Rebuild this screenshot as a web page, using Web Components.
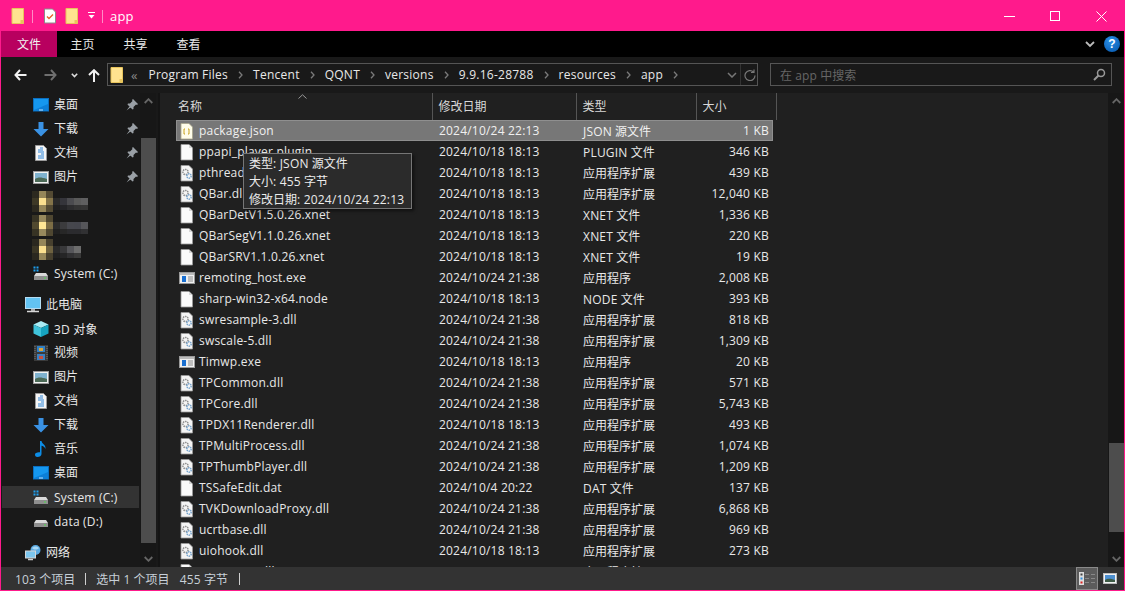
<!DOCTYPE html>
<html lang="zh"><head><meta charset="utf-8"><title>app</title>
<style>
html,body{margin:0;padding:0;background:#ff1a8c;overflow:hidden}
body{width:1125px;height:591px;font:12px "Open Sans","Noto Sans CJK SC",sans-serif;color:#e8e8e8}
</style></head><body>
<win-frame>
  <title-bar slot="title">app</title-bar>
  <ribbon-bar slot="ribbon"></ribbon-bar>
  <nav-bar slot="nav"></nav-bar>
  <nav-pane slot="side">
    <nav-item icon="desktop" pin>桌面</nav-item>
    <nav-item icon="down" pin>下载</nav-item>
    <nav-item icon="docs" pin>文档</nav-item>
    <nav-item icon="pics" pin>图片</nav-item>
    <blur-item w="1"></blur-item>
    <blur-item w="2"></blur-item>
    <blur-item w="3"></blur-item>
    <nav-item icon="sys" latin>System (C:)</nav-item>
    <nav-item icon="pc" top="8" indent>此电脑</nav-item>
    <nav-item icon="cube" latin>3D 对象</nav-item>
    <nav-item icon="video">视频</nav-item>
    <nav-item icon="pics">图片</nav-item>
    <nav-item icon="docs">文档</nav-item>
    <nav-item icon="down">下载</nav-item>
    <nav-item icon="music">音乐</nav-item>
    <nav-item icon="desktop">桌面</nav-item>
    <nav-item icon="sys" selected latin>System (C:)</nav-item>
    <nav-item icon="drive" latin>data (D:)</nav-item>
    <nav-item icon="net" top="8" indent>网络</nav-item>
  </nav-pane>
  <file-list slot="main"></file-list>
  <status-bar slot="status"></status-bar>
</win-frame>
<script>
const ICONS={
 folder:`<svg width="16" height="16" viewBox="0 0 16 16"><path d="M2 .5h11.500v15H2z" fill="#ffe38f" stroke="#e8c45c"/><path d="M13.500 12v3.500H10.500V12z" fill="#e8c45c"/></svg>`,
 check:`<svg width="16" height="16" viewBox="0 0 16 16"><path d="M2.500 1h8l3 3v11h-11z" fill="#fff" stroke="#8c8c8c"/><path d="M5 8.500l2 2 4-4" fill="none" stroke="#e9632a" stroke-width="1.400"/></svg>`,
 blank:`<svg width="16" height="18" viewBox="0 0 16 18"><path d="M2 1.500h8l3.500 3.500v12H2z" fill="#fafafa" stroke="#9a9a9a" stroke-width=".8"/><path d="M10 1.500v3.500h3.500z" fill="#d8d8d8"/></svg>`,
 json:`<svg width="16" height="18" viewBox="0 0 16 18"><path d="M2 1.500h8l3.500 3.500v12H2z" fill="#fffdea" stroke="#a8a48c" stroke-width=".8"/><path d="M6 7h-1v5h1M9 7h1v5h-1" fill="none" stroke="#c9a421"/></svg>`,
 dll:`<svg width="16" height="18" viewBox="0 0 16 18"><path d="M2 1.500h8l3.500 3.500v12H2z" fill="#f4f4f4" stroke="#9a9a9a" stroke-width=".8"/><circle cx="6.500" cy="8" r="2.600" fill="none" stroke="#8d8d8d" stroke-width="1.500" stroke-dasharray="1.500 .8"/><circle cx="10" cy="12" r="2.200" fill="none" stroke="#6f9fcb" stroke-width="1.400" stroke-dasharray="1.400 .7"/></svg>`,
 exe:`<svg width="16" height="16" viewBox="0 0 16 16"><rect x=".5" y="2.500" width="15" height="11" fill="#f0f0f0" stroke="#9a9a9a"/><rect x="1" y="3" width="14" height="2" fill="#bbb"/><rect x="3" y="6" width="4" height="6" fill="#1a6fd0"/><path d="M9 7h5M9 9h5M9 11h5" stroke="#8a8a8a"/></svg>`,
 desktop:`<svg width="16" height="14" viewBox="0 0 16 14"><rect x=".5" y=".5" width="15" height="12.500" fill="#1597ef" stroke="#0b6fc0"/><path d="M1 12l14-6v7H1z" fill="#0c7fd8"/><path d="M6 12h4" stroke="#bfe3ff"/></svg>`,
 down:`<svg width="16" height="16" viewBox="0 0 16 16"><path d="M5.500 1h5v7h5L8 15.500.5 8h5z" fill="#3a92e4"/></svg>`,
 docs:`<svg width="12" height="16" viewBox="0 0 12 16"><path d="M.5.500h8l3 3v12H.5z" fill="#f5f5f5" stroke="#9a9a9a"/><path d="M5 3h3M3 5h5M3 7h6M6 9h3M3 11h6M3 13h6" stroke="#2f86d8"/></svg>`,
 pics:`<svg width="16" height="13" viewBox="0 0 16 13"><rect x=".5" y=".5" width="15" height="12" fill="#f2f2f2" stroke="#9a9a9a"/><rect x="2" y="2" width="12" height="9" fill="#7fb2cf"/><path d="M2 8c3-2 6-2 12 0v3H2z" fill="#4c6a57"/></svg>`,
 sys:`<svg width="16" height="14" viewBox="0 0 16 14"><path d="M.500.500h2v2h-2zM3.500.500h2v2h-2zM.500 3.500h2v2h-2zM3.500 3.500h2v2h-2z" fill="#1fa0f0"/><path d="M3 7h10l2 3H1z" fill="#d9d9d9"/><rect x="1" y="10" width="14" height="4" fill="#8f8f8f"/><rect x="11" y="11.500" width="2" height="1" fill="#4be04b"/></svg>`,
 drive:`<svg width="16" height="14" viewBox="0 0 16 14"><path d="M3 6h10l2 3H1z" fill="#d9d9d9"/><rect x="1" y="9" width="14" height="4" fill="#8f8f8f"/><rect x="11" y="10.500" width="2" height="1" fill="#4be04b"/></svg>`,
 pc:`<svg width="16" height="16" viewBox="0 0 16 16"><rect x=".5" y=".5" width="15" height="11" fill="#63c3f2" stroke="#b5dcf2"/><path d="M6 12h4v2H6z" fill="#a8a8a8"/><path d="M2 14.500h12" stroke="#d8d8d8" stroke-width="1.500"/></svg>`,
 cube:`<svg width="16" height="16" viewBox="0 0 16 16"><path d="M8 0l7.500 3.500L8 7 .5 3.500z" fill="#a9ecf5"/><path d="M.5 3.500L8 7v9l-7.500-3.500z" fill="#3fc3da"/><path d="M15.500 3.500L8 7v9l7.500-3.500z" fill="#16a4c0"/></svg>`,
 video:`<svg width="14" height="16" viewBox="0 0 14 16"><rect width="14" height="16" fill="#3a3a3a"/><rect x="3" y="1" width="8" height="6" fill="#2f7fc4"/><rect x="3" y="9" width="8" height="6" fill="#3a7fc0"/><rect x="5" y="3" width="4" height="3" fill="#d9a63a"/><rect x="5" y="11" width="4" height="3" fill="#c94f3a"/><path d="M1 1v14M13 1v14" stroke="#777" stroke-dasharray="1 1" stroke-width="1"/></svg>`,
 music:`<svg width="12" height="16" viewBox="0 0 12 16"><path d="M5 0h1.500c.5 3 4.500 3.500 4 8-.6-2-2.500-3-4-3.300V13c0 2-2 3-4 3S0 15 0 13.500 2 11 5 11.300z" fill="#0d8de6"/></svg>`,
 net:`<svg width="16" height="16" viewBox="0 0 16 16"><circle cx="10.500" cy="5" r="5" fill="#5aa9e0"/><path d="M7 3c2-2 5-2 7 0-2 2-5 2-7 0z" fill="#a8d8f5"/><rect x=".5" y="6" width="10" height="7" fill="#7cc6ee" stroke="#d6d6d6"/><path d="M3 14.500h5" stroke="#cfcfcf" stroke-width="1.500"/></svg>`,
 pin:`<svg width="12" height="12" viewBox="0 0 12 12"><path d="M7 0l5 5-1 1-1-.5L7.500 8 7.500 10 6.500 10.500 1.500 5.500 2 4.500 4 4.500 6.500 2 6 1zM3.500 7.500L.5 11.500 4.500 8.500z" fill="#9aa0a6"/></svg>`
};
const L=s=>s.replace(/[\x21-\x7e]+(?: [\x21-\x7e]+)*/g,m=>`<span style="letter-spacing:.2px">${m}</span>`);
function def(name,css,html){
  customElements.define(name,class extends HTMLElement{
    constructor(){super();this.attachShadow({mode:'open'}).innerHTML=`<style>${css}</style>${typeof html==='function'?html(this):html}`;}
  });
}
customElements.define('win-icon',class extends HTMLElement{
  connectedCallback(){ if(this.shadowRoot)return; this.attachShadow({mode:'open'}).innerHTML=`<style>:host{display:inline-flex;align-items:center;justify-content:center;width:var(--w,16px);height:var(--h,18px);flex:none}svg{display:block}</style>${ICONS[this.getAttribute('name')]||''}`;}
});
def('win-frame',`
:host{display:grid;grid-template-columns:159px 948px 16px;grid-template-rows:30px 26px 36px 474px 23px;width:1123px;height:589px;margin:1px;background:#202020}
.t{grid-column:1/-1}.s{grid-column:1/-1}
.side{overflow:hidden;display:flex;border-right:2px solid #141414;padding-right:2px;background:#191919;box-sizing:border-box}
.main{overflow:hidden;background:#202020;min-width:0}
.v{background:#171717;display:flex}
`,`<div class="t"><slot name="title"></slot></div><div class="t"><slot name="ribbon"></slot></div><div class="t"><slot name="nav"></slot></div>
<div class="side"><slot name="side"></slot><scroll-rail thumb-top="45" thumb-height="405"></scroll-rail></div>
<div class="main"><slot name="main"></slot></div>
<div class="v"><scroll-rail thumb-top="350" thumb-height="89"></scroll-rail></div>
<div class="s"><slot name="status"></slot></div>`);
customElements.define('scroll-rail',class extends HTMLElement{
  connectedCallback(){ if(this.shadowRoot)return;
    const t=+this.getAttribute('thumb-top'),h=+this.getAttribute('thumb-height');
    this.attachShadow({mode:'open'}).innerHTML=`<style>:host{display:block;width:16px;height:100%;background:#171717;flex:none}
    .a{height:16px;display:flex;align-items:center;justify-content:center}
    .track{height:calc(100% - 32px);padding-top:${t-16}px;box-sizing:border-box}
    .th{width:15px;margin-left:1px;height:${h}px;background:#4d4d4d}</style>
    <div class="a"><svg width="9" height="6" viewBox="0 0 9 6"><path d="M.7 5L4.500 1.200 8.300 5" fill="none" stroke="#666" stroke-width="1.800"/></svg></div>
    <div class="track"><div class="th"></div></div>
    <div class="a"><svg width="9" height="6" viewBox="0 0 9 6"><path d="M.7 1L4.500 4.800 8.300 1" fill="none" stroke="#666" stroke-width="1.800"/></svg></div>`;
  }
});
def('title-bar',`
:host{display:flex;align-items:center;height:30px;background:#ff1a8c;color:#fff;font-size:12px}
.q{display:flex;align-items:center;padding-left:9px;--h:16px}
.sep{width:1px;height:13px;background:#ff8cc6}
.dd{margin:0 6px 0 7px;display:block}
.txt{font-size:13px;letter-spacing:.2px}
.b{margin-left:auto;display:flex}
.w{width:46px;height:30px;display:flex;align-items:center;justify-content:center}
`,`<div class="q"><win-icon name="folder"></win-icon><span class="sep" style="margin:0 9px 0 6px"></span><win-icon name="check"></win-icon><span style="width:6px"></span><win-icon name="folder"></win-icon>
<svg class="dd" width="9" height="8" viewBox="0 0 9 8"><path d="M1 .5h7" stroke="#fff"/><path d="M1.500 3h6L4.500 6.500z" fill="#fff"/></svg><span class="sep" style="margin-right:7px"></span></div><span class="txt"><slot></slot></span>
<div class="b"><div class="w"><svg width="11" height="1"><rect width="11" height="1" fill="#fff"/></svg></div><div class="w"><svg width="10" height="10"><rect x=".5" y=".5" width="9" height="9" fill="none" stroke="#fff"/></svg></div><div class="w"><svg width="11" height="11"><path d="M.5.500l10 10M10.500.500l-10 10" stroke="#fff"/></svg></div></div>`);
def('ribbon-bar',`
:host{display:flex;align-items:center;height:26px;background:#000;color:#e8e8e8;font-size:12px}
.f{width:56px;height:26px;background:#b8005f;display:flex;align-items:center;justify-content:center;color:#f2f2f2}
.t{width:53px;text-align:center}
.t.a{margin-left:-1px}
.r{margin-left:auto;display:flex;align-items:center;gap:9px;padding-right:4px}
.h{width:16px;height:16px;border-radius:50%;background:radial-gradient(circle at 40% 30%,#2a8fe8,#0454a8);color:#fff;font:bold 12px "Liberation Sans",sans-serif;display:flex;align-items:center;justify-content:center}
`,`<div class="f">文件</div><div class="t a">主页</div><div class="t">共享</div><div class="t">查看</div>
<div class="r"><svg width="10" height="7" viewBox="0 0 10 7"><path d="M1 1l4 4 4-4" fill="none" stroke="#bbb" stroke-width="1.800"/></svg><div class="h">?</div></div>`);
def('nav-bar',`
:host{display:flex;align-items:center;height:36px;background:#191919;padding-left:13px;box-sizing:border-box;color:#e8e8e8;--h:16px}
.btn{display:flex;width:93px;align-items:center;flex:none}
.ad{width:651px;height:23px;box-sizing:border-box;border:1px solid #555;display:flex;align-items:center;flex:none;padding-left:1px;margin-top:-1px;letter-spacing:.25px}
.c{color:#8a8a8a;font-size:13px;margin:0 11px 0 6px;letter-spacing:0}
.ch{margin:0 10px;display:block;flex:none}
.sp{flex:1}
.sr{margin-left:12px;width:342px;height:23px;box-sizing:border-box;border:1px solid #555;display:flex;align-items:center;padding:0 5px 0 9px;color:#666;justify-content:space-between;margin-top:-1px;flex:none}
`,`<div class="btn">
<svg width="13" height="12" viewBox="0 0 13 12"><path d="M6 1L1.500 6 6 11M1.500 6H12.500" fill="none" stroke="#f2f2f2" stroke-width="2"/></svg>
<svg style="margin-left:17px" width="13" height="12" viewBox="0 0 13 12"><path d="M7 1L11.500 6 7 11M11.500 6H.5" fill="none" stroke="#6f6f6f" stroke-width="2"/></svg>
<svg style="margin-left:14px" width="7" height="5" viewBox="0 0 7 5"><path d="M.8.800l2.700 2.700L6.200.800" fill="none" stroke="#ddd" stroke-width="1.600"/></svg>
<svg style="margin-left:10px" width="12" height="13" viewBox="0 0 12 13"><path d="M1 6L6 1.200 11 6M6 1.500V13" fill="none" stroke="#f2f2f2" stroke-width="2"/></svg>
</div>
<div class="ad"><win-icon name="folder"></win-icon><span class="c">«</span><span>Program Files</span>${chev()}<span>Tencent</span>${chev()}<span>QQNT</span>${chev()}<span>versions</span>${chev()}<span>9.9.16-28788</span>${chev()}<span>resources</span>${chev()}<span>app</span>${chev()}<span class="sp"></span>
<svg width="10" height="6" viewBox="0 0 10 6"><path d="M1 1l4 4 4-4" fill="none" stroke="#777" stroke-width="1.500"/></svg><span style="width:1px;height:21px;background:#333;margin:0 3px"></span>
<svg style="margin-right:1px" width="12" height="12" viewBox="0 0 12 12"><path d="M9.500 3A5 5 0 1 0 11 6.500M10 .5v3H7" fill="none" stroke="#777" stroke-width="1.200"/></svg></div>
<div class="sr"><span>${L('在 app 中搜索')}</span><svg width="13" height="13" viewBox="0 0 13 13"><circle cx="8" cy="5" r="3.500" fill="none" stroke="#999" stroke-width="1.500"/><path d="M5.500 7.500L1 12" stroke="#999" stroke-width="2"/></svg></div>`);
function chev(){return `<svg class="ch" width="5" height="8" viewBox="0 0 5 8"><path d="M1 .8L4 4 1 7.200" fill="none" stroke="#7a7a7a" stroke-width="1.300"/></svg>`}
def('nav-pane',`
:host{display:block;flex:1;min-width:0;background:#191919;padding:0 0 0 1px;box-sizing:border-box;overflow:hidden}
`,`<slot></slot>`);
customElements.define('nav-item',class extends HTMLElement{
  connectedCallback(){ if(this.shadowRoot)return;
    const ind=this.hasAttribute('indent'),top=this.getAttribute('top')||0,sel=this.hasAttribute('selected'),lat=this.hasAttribute('latin');
    this.attachShadow({mode:'open'}).innerHTML=`<style>
    :host{display:flex;align-items:center;height:24px;margin-top:${top}px;padding-left:${ind?23:31}px;box-sizing:border-box;width:137px;${sel?'background:linear-gradient(#333,#333) no-repeat 0 1px/137px 22px;':''}color:#e8e8e8;font-size:12px;${lat?'letter-spacing:.2px;':''}}
    .tx{margin-left:5px;white-space:nowrap;flex:1;padding-bottom:${lat?0:2}px}.pin{margin-right:1px;display:flex}
    win-icon{--w:16px;--h:16px}</style>
    <win-icon name="${this.getAttribute('icon')}"></win-icon><span class="tx"><slot></slot></span>${this.hasAttribute('pin')?`<span class="pin">${ICONS.pin}</span>`:''}`;
  }
});
const BL={1:['#3d3826','#fbe08f','#847449','#2a2a2a','#35353b','#4b4b4f','#5a5a5a','#5f5f60'],
2:['#51492f','#ffe695','#7c6d45','#2b2b2b','#3b3b3d','#46474d','#45464d','#56565a'],
3:['#3b3625','#fbe08f','#6e6240','#2a2a2a','#38383a','#56565a','#6c6c6c']};
customElements.define('blur-item',class extends HTMLElement{
  connectedCallback(){ if(this.shadowRoot)return;
    let s='';BL[this.getAttribute('w')].forEach((col,i)=>{const x=i*7;
      if(i<3){s+=`<rect x="${x}" y="0" width="7" height="21" fill="${col}"/><rect x="${x}" y="0" width="7" height="7" fill="#191919" opacity=".45"/><rect x="${x}" y="14" width="7" height="7" fill="#191919" opacity=".45"/>`}
      else{s+=`<rect x="${x}" y="7" width="7" height="7" fill="${col}"/><rect x="${x}" y="14" width="7" height="5" fill="${col}" opacity=".4"/>`}});
    this.attachShadow({mode:'open'}).innerHTML=`<style>:host{display:flex;align-items:center;height:24px;padding-left:30px;box-sizing:border-box}svg{display:block}</style><svg width="60" height="21">${s}</svg>`;
  }
});
const FILES=[
['json','package.json','2024/10/24 22:13','JSON 源文件','1 KB'],
['blank','ppapi_player.plugin','2024/10/18 18:13','PLUGIN 文件','346 KB'],
['dll','pthread_dll','2024/10/18 18:13','应用程序扩展','439 KB'],
['dll','QBar.dll','2024/10/18 18:13','应用程序扩展','12,040 KB'],
['blank','QBarDetV1.5.0.26.xnet','2024/10/18 18:13','XNET 文件','1,336 KB'],
['blank','QBarSegV1.1.0.26.xnet','2024/10/18 18:13','XNET 文件','220 KB'],
['blank','QBarSRV1.1.0.26.xnet','2024/10/18 18:13','XNET 文件','19 KB'],
['exe','remoting_host.exe','2024/10/24 21:38','应用程序','2,008 KB'],
['blank','sharp-win32-x64.node','2024/10/18 18:13','NODE 文件','393 KB'],
['dll','swresample-3.dll','2024/10/24 21:38','应用程序扩展','818 KB'],
['dll','swscale-5.dll','2024/10/24 21:38','应用程序扩展','1,309 KB'],
['exe','Timwp.exe','2024/10/18 18:13','应用程序','20 KB'],
['dll','TPCommon.dll','2024/10/24 21:38','应用程序扩展','571 KB'],
['dll','TPCore.dll','2024/10/24 21:38','应用程序扩展','5,743 KB'],
['dll','TPDX11Renderer.dll','2024/10/18 18:13','应用程序扩展','493 KB'],
['dll','TPMultiProcess.dll','2024/10/24 21:38','应用程序扩展','1,074 KB'],
['dll','TPThumbPlayer.dll','2024/10/24 21:38','应用程序扩展','1,209 KB'],
['blank','TSSafeEdit.dat','2024/10/4 20:22','DAT 文件','137 KB'],
['dll','TVKDownloadProxy.dll','2024/10/24 21:38','应用程序扩展','6,868 KB'],
['dll','ucrtbase.dll','2024/10/24 21:38','应用程序扩展','969 KB'],
['dll','uiohook.dll','2024/10/18 18:13','应用程序扩展','273 KB'],
['blank','vcruntime.dll','2024/10/18 18:13','应用程序扩展','334 KB']];
def('file-row',`
:host{display:grid;grid-template-columns:256px 144px 120px 76px;height:21px;align-items:center;box-sizing:border-box;width:597px;margin-left:16px;color:#e8e8e8;font-size:12px;white-space:nowrap;border:1px solid transparent}
:host([selected]){background:#777;border-color:#8f8f8f;color:#f0f0f0}
.n{display:flex;align-items:center;padding-left:2px;gap:4px;overflow:hidden;letter-spacing:.2px}
win-icon{--w:16px;--h:18px}
.d{padding-left:6px;letter-spacing:.2px}.t{padding-left:6px}.s{text-align:right;padding-right:4px;letter-spacing:.2px}
`,t=>{const [i,n,d,y,s]=FILES[+t.getAttribute('i')];return `<span class="n"><win-icon name="${i}"></win-icon><span>${n}</span></span><span class="d">${d}</span><span class="t">${L(y)}</span><span class="s">${s}</span>`});
def('file-list',`
:host{display:block;height:474px;overflow:hidden;background:#202020;position:relative;font-size:12px}
.h{display:grid;grid-template-columns:272.500px 144px 120px 80px;height:27px;color:#d8d8d8;position:relative}
.h span{height:27px;line-height:27px;border-right:1px solid #555;padding-left:18px;box-sizing:border-box}
.h span+span{padding-left:6px}
.caret{position:absolute;left:138px;top:1px}
.tip{position:absolute;left:83px;top:60px;width:169px;height:56px;box-sizing:border-box;background:#2b2b2b;border:1px solid #767676;padding:1px 5px;line-height:18px;color:#ececec;font-size:12px;box-shadow:2px 2px 3px rgba(0,0,0,.5);white-space:nowrap}
`,()=>`<div class="h"><span>名称</span><span>修改日期</span><span>类型</span><span>大小</span><svg class="caret" width="9" height="5" viewBox="0 0 9 5"><path d="M.5 4.500L4.500.8 8.500 4.500" fill="none" stroke="#999"/></svg></div>
${FILES.map((f,i)=>`<file-row i="${i}"${i==0?' selected':''}></file-row>`).join('')}
<div class="tip">${L('类型: JSON 源文件')}<br>${L('大小: 455 字节')}<br>${L('修改日期: 2024/10/24 22:13')}</div>`);
def('status-bar',`
:host{display:flex;align-items:center;height:23px;background:#333;color:#c8d0d8;font-size:12px;padding-left:14px;box-sizing:border-box;white-space:nowrap}
.b{width:1px;height:12px;background:#cfcfcf;margin:0 10px}
.r{margin-left:auto;display:flex;height:23px;align-items:center;padding-right:2px}
.det{width:22px;height:23px;box-sizing:border-box;background:#5c5c5c;border:1px solid #8a8a8a;display:flex;align-items:center;justify-content:center}
.th{width:24px;display:flex;justify-content:center}
`,`<span>${L('103 个项目')}</span><span class="b"></span><span>${L('选中 1 个项目')}</span><span style="margin-left:10px">${L('455 字节')}</span><span class="b" style="margin-left:11px"></span>
<div class="r"><div class="det"><svg width="16" height="13" viewBox="0 0 16 13"><rect width="5" height="13" fill="#ddd"/><rect x="1.500" y="1.500" width="2" height="2" fill="#444"/><rect x="1.500" y="5.500" width="2" height="2" fill="#2f8fe0"/><rect x="1.500" y="9.500" width="2" height="2" fill="#d22"/><path d="M6 2.500h4M12 2.500h4M6 6.500h4M12 6.500h4M6 10.500h4M12 10.500h4" stroke="#888"/></svg></div>
<div class="th"><svg width="14" height="11" viewBox="0 0 14 11"><rect x=".5" y=".5" width="13" height="10" fill="#f2f2f2" stroke="#bbb"/><rect x="2" y="2" width="10" height="7" fill="#4d8fd0"/><path d="M2 7c3-2 6-1 10 0v2H2z" fill="#3e5b45"/></svg></div></div>`);
</script>
</body></html>
